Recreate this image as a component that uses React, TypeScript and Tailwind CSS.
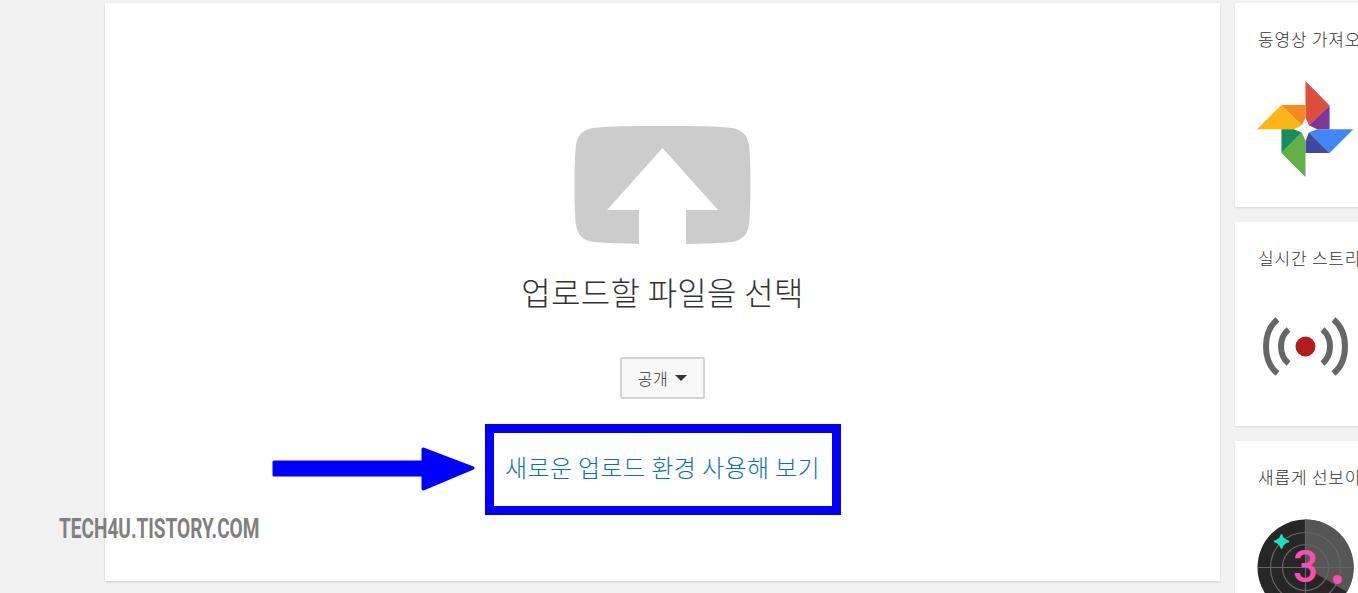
import React from "react";

const kr = "font-['Noto_Sans_CJK_KR','Noto_Sans',sans-serif] font-light";

function UploadIcon() {
  return (
    <svg width="177" height="118" viewBox="0 0 177 118">
      <path
        d="M88.5 0C120 0 145 0.3 158 2C168 3.5 173.5 9 175 19C177 35 177 83 175 99C173.5 109 168 114.5 158 116C150 117 125 117.7 112 118L112 84L144 84L88.5 22L33 84L65 84L65 118C52 117.7 27 117 19 116C9 114.5 3.5 109 2 99C0 83 0 35 2 19C3.5 9 9 3.5 19 2C32 0.3 57 0 88.5 0Z"
        fill="#cccccc"
      />
    </svg>
  );
}

function Pinwheel() {
  return (
    <svg width="97" height="97" viewBox="110 240 290 290">
      <polygon points="255,243 327,316 265,375 255,352" fill="#dd4f3c" />
      <polygon points="327,316 327,387 290,387 265,375" fill="#7e3794" />
      <polygon points="183,315 255,315 255,352 244,375" fill="#f38b1f" />
      <polygon points="110,387 183,315 244,375 220,387" fill="#fdb515" />
      <polygon points="398,387 327,458 265,397 290,387" fill="#4285f4" />
      <polygon points="327,458 255,458 255,422 265,397" fill="#3f4a9e" />
      <polygon points="183,387 220,387 244,397 183,458" fill="#1a8b60" />
      <polygon points="183,458 244,397 255,422 255,530" fill="#62b046" />
    </svg>
  );
}

function Broadcast() {
  return (
    <svg width="97" height="65" viewBox="0 0 97 65" fill="none">
      <circle cx="48.5" cy="32.5" r="10" fill="#b71c1c" />
      <g stroke="#666666" strokeWidth="6" strokeLinecap="butt">
        <path d="M31.5 15.5C21.5 24 21.5 41 31.5 49.5" />
        <path d="M20.5 5.5C5.2 18 5.2 47 20.5 59.5" />
        <path d="M65.5 15.5C75.5 24 75.5 41 65.5 49.5" />
        <path d="M76.5 5.5C91.8 18 91.8 47 76.5 59.5" />
      </g>
    </svg>
  );
}

function Radar() {
  return (
    <svg width="97" height="97" viewBox="0 0 97 97" className="shrink-0">
      <circle cx="48.5" cy="48.5" r="48" fill="#262626" />
      <path d="M48.5 0.5A48 48 0 0 1 90 73L48.5 48.5Z" fill="#565656" />
      <g stroke="#666666" strokeWidth="1.2" fill="none">
        <circle cx="48.5" cy="48.5" r="35" />
        <circle cx="48.5" cy="48.5" r="23" />
        <path d="M0.5 48.5H96.5M48.5 0.5V96.5" />
      </g>
      <path
        d="M24.5 15.5C25.5 19.5 27.5 21.5 32 22.5C27.5 23.5 25.5 25.5 24.5 29.5C23.5 25.5 21.5 23.5 17 22.5C21.5 21.5 23.5 19.5 24.5 15.5Z"
        fill="#19e3c0"
        stroke="#19e3c0"
        strokeWidth="1.5"
      />
      <text x="36" y="63" fontSize="44" fontWeight="500" fontFamily="Roboto, sans-serif" fill="#ff4bb4">
        3
      </text>
      <circle cx="80.5" cy="60.5" r="4.5" fill="#ff4bb4" />
    </svg>
  );
}

function SideCard({ title, className, children }: { title: string; className: string; children: React.ReactNode }) {
  return (
    <div className={`bg-white shadow-[0_1px_2px_rgba(0,0,0,0.1)] flex flex-col pl-[23px] pt-[25px] ${className}`}>
      <div className={`text-[17px] leading-[22px] tracking-[0.8px] text-[#333333] whitespace-nowrap ${kr}`}>{title}</div>
      {children}
    </div>
  );
}

export default function App() {
  return (
    <div className="relative w-[1358px] h-[593px] overflow-hidden bg-[#f1f1f1] flex items-start pl-[105px] pt-[3px] gap-[15px]">
      <main className="relative w-[1115px] h-[578px] shrink-0 bg-white shadow-[0_1px_2px_rgba(0,0,0,0.15)] flex flex-col items-center pt-[123px]">
        <UploadIcon />
        <h1 className={`mt-[24px] text-[32px] leading-[46px] tracking-[0.3px] text-[#333333] whitespace-nowrap ${kr}`}>
          업로드할 파일을 선택
        </h1>
        <button
          className={`mt-[43px] w-[85px] h-[42px] flex items-center justify-center gap-[7px] rounded-[2px] border-2 border-[#d3d3d3] bg-[#f8f8f8] text-[16px] tracking-[0.5px] text-[#333333] ${kr}`}
        >
          공개
          <span className="w-0 h-0 border-x-[6px] border-x-transparent border-t-[6px] border-t-[#333333]" />
        </button>
        <div className="mt-[25px] w-[356px] h-[91px] pb-[5px] border-[9px] border-[#0000ff] flex items-center justify-center">
          <span className={`text-[24px] leading-none tracking-[0.4px] text-[#0b6fbf] whitespace-nowrap ${kr}`}>
            새로운 업로드 환경 사용해 보기
          </span>
        </div>
        <svg className="absolute left-[166px] top-[442px]" width="204" height="46" viewBox="0 0 204 46">
          <path
            d="M3 17H152V4L202 23L152 44V30H3Z"
            fill="#0000ff"
            stroke="#0000ff"
            strokeWidth="3"
            strokeLinejoin="round"
          />
        </svg>
      </main>
      <aside className="w-[200px] shrink-0 flex flex-col gap-[15px]">
        <SideCard title="동영상 가져오기" className="h-[204px]">
          <div className="mt-[30px] -ml-[1px]">
            <Pinwheel />
          </div>
        </SideCard>
        <SideCard title="실시간 스트리밍" className="h-[204px]">
          <div className="mt-[45px] -ml-[1px]">
            <Broadcast />
          </div>
        </SideCard>
        <SideCard title="새롭게 선보이는" className="h-[204px]">
          <div className="mt-[31px] -ml-[1px]">
            <Radar />
          </div>
        </SideCard>
      </aside>
      <div className="absolute left-[59px] top-[513px] text-[28px] leading-[32px] font-bold text-[#808080] whitespace-nowrap origin-left scale-x-[0.68] font-['Roboto',sans-serif]">
        TECH4U.TISTORY.COM
      </div>
    </div>
  );
}
